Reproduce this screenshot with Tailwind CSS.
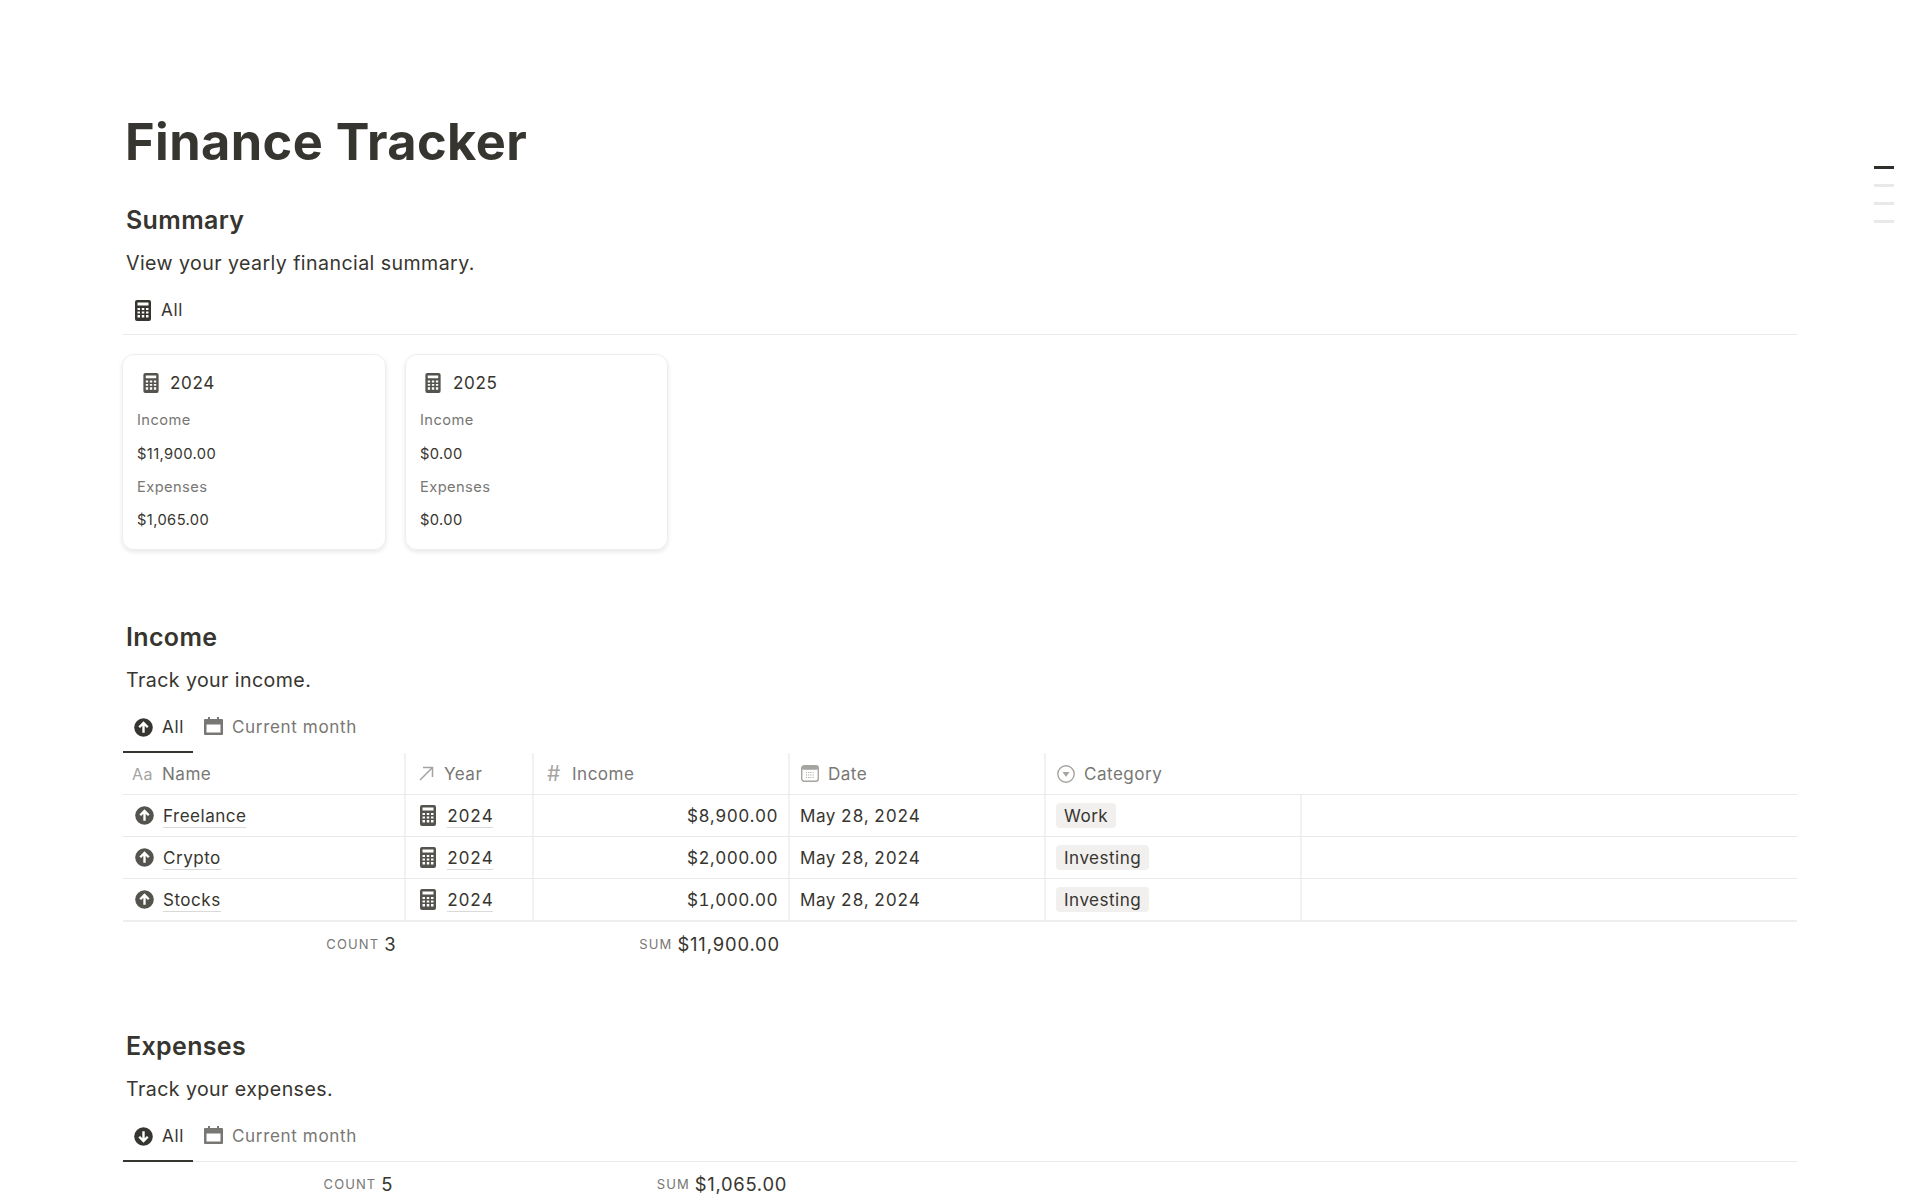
<!DOCTYPE html>
<html lang="en"><head><meta charset="utf-8"><script src="https://cdn.jsdelivr.net/npm/@tailwindcss/browser@4"></script><title>Finance Tracker</title></head>
<body class="bg-white overflow-hidden h-[1199px] relative font-['Inter',sans-serif] text-[#37352f]">
<svg width="0" height="0" class="absolute"><defs>
<symbol id="calc" viewBox="0 0 16 21"><path fill-rule="evenodd" fill="currentColor" d="M2 0h12a2 2 0 0 1 2 2v17a2 2 0 0 1-2 2H2a2 2 0 0 1-2-2V2a2 2 0 0 1 2-2zM2.500 2.500v3h11v-3zM2.500 8v2h2.500V8zM6.800 8v2h2.500V8zM11 8v2h2.500V8zM2.500 11.500v2h2.500v-2zM6.800 11.500v2h2.500v-2zM11 11.500v2h2.500v-2zM2.500 15v2.500h2.500V15zM6.800 15v2.500h2.500V15zM11 15v2.500h2.500V15z"/></symbol>
<symbol id="up" viewBox="0 0 20 20"><circle cx="10" cy="10" r="9.800" fill="currentColor"/><path d="M10 15.500V5.200M5.500 9.700 10 5.200l4.500 4.500" fill="none" stroke="#fff" stroke-width="2.500"/></symbol>
<symbol id="down" viewBox="0 0 20 20"><circle cx="10" cy="10" r="9.800" fill="currentColor"/><path d="M10 4.500v10.300M5.500 10.300 10 14.800l4.500-4.500" fill="none" stroke="#fff" stroke-width="2.500"/></symbol>
<symbol id="cal" viewBox="0 0 19 18"><path fill-rule="evenodd" fill="currentColor" d="M4 0h2v2h7V0h2v2h3a1 1 0 0 1 1 1v14a1 1 0 0 1-1 1H1a1 1 0 0 1-1-1V3a1 1 0 0 1 1-1h3zM2.500 7.500v8h14v-8z"/></symbol>
</defs></svg>

<main class="pt-[112px] pl-[123px] w-[1797px]">
  <h1 class="h-[60px] leading-[60px] pl-[2px] text-[50.500px] font-bold tracking-[0.42px]">Finance Tracker</h1>

  <h2 class="mt-[29px] h-[38px] leading-[38px] pl-[3px] text-[25px] font-semibold tracking-[0.35px]">Summary</h2>
  <p class="mt-[9px] h-[30px] leading-[30px] pl-[3px] text-[19.600px] tracking-[0.42px]">View your yearly financial summary.</p>
  <div class="mt-[8px] h-[49px] border-b border-[#e9e9e7] flex items-center pl-[12px] gap-[10px]">
    <svg class="w-[16px] h-[21px] text-[#37352f]"><use href="#calc"/></svg>
    <span class="text-[17.100px] leading-[24px] tracking-[0.65px]">All</span>
  </div>

  <div class="mt-[19px] flex gap-[19px] h-[196px]">
    <article class="-ml-px w-[264px] rounded-[12px] border border-[#eeeeec] shadow-[0_2px_4px_rgba(15,15,15,0.1)] pl-[14px] pt-[16px] tracking-[0.4px]">
      <div class="flex items-center h-[24px] pl-[6px] gap-[11px]"><svg class="w-[16px] h-[20px] text-[#55534e]"><use href="#calc"/></svg><span class="text-[17.100px] tracking-[0.6px]">2024</span></div>
      <div class="mt-[8px] h-[34px] leading-[34px] text-[14.700px] text-[#787774]">Income</div>
      <div class="h-[34px] leading-[34px] text-[14.700px]">$11,900.00</div>
      <div class="h-[33px] leading-[33px] text-[14.700px] text-[#787774]">Expenses</div>
      <div class="h-[33px] leading-[33px] text-[14.700px]">$1,065.00</div>
    </article>
    <article class="w-[263px] rounded-[12px] border border-[#eeeeec] shadow-[0_2px_4px_rgba(15,15,15,0.1)] pl-[14px] pt-[16px] tracking-[0.4px]">
      <div class="flex items-center h-[24px] pl-[5px] gap-[12px]"><svg class="w-[16px] h-[20px] text-[#55534e]"><use href="#calc"/></svg><span class="text-[17.100px] tracking-[0.6px]">2025</span></div>
      <div class="mt-[8px] h-[34px] leading-[34px] text-[14.700px] text-[#787774]">Income</div>
      <div class="h-[34px] leading-[34px] text-[14.700px]">$0.00</div>
      <div class="h-[33px] leading-[33px] text-[14.700px] text-[#787774]">Expenses</div>
      <div class="h-[33px] leading-[33px] text-[14.700px]">$0.00</div>
    </article>
  </div>

  <h2 class="mt-[68px] h-[38px] leading-[38px] pl-[3px] text-[25px] font-semibold tracking-[0.35px]">Income</h2>
  <p class="mt-[9px] h-[30px] leading-[30px] pl-[3px] text-[19.600px] tracking-[0.42px]">Track your income.</p>
  <div class="mt-[8px] h-[50px] flex text-[17.100px] tracking-[0.62px]">
    <div class="w-[70px] border-b-[2px] border-[#37352f] flex items-center pl-[11px] gap-[9px]"><svg class="w-[19px] h-[19px]"><use href="#up"/></svg><span>All</span></div>
    <div class="border-b-[2px] border-transparent flex items-center pl-[11px] gap-[9px] text-[#787774]"><svg class="w-[19px] h-[18px] -mt-[2px]"><use href="#cal"/></svg><span>Current month</span></div>
  </div>

  <div class="text-[17.100px] tracking-[0.47px]">
    <div class="flex h-[42px] border-b border-[#e9e9e7] text-[#787774]">
      <div class="w-[283px] border-r-[2px] border-[#f1f1ef] flex items-center pl-[9px] gap-[9px]"><span class="text-[#a5a4a0] text-[16px]">Aa</span><span>Name</span></div>
      <div class="w-[128px] border-r-[2px] border-[#f1f1ef] flex items-center pl-[13px] gap-[10px]"><svg class="w-[15px] h-[15px] text-[#a5a4a0]" viewBox="0 0 15 15" fill="none" stroke="currentColor" stroke-width="1.500"><path d="M1 14 13.500 1.500M4 1.500h9.500V11"/></svg><span>Year</span></div>
      <div class="w-[256px] border-r-[2px] border-[#f1f1ef] flex items-center pl-[13px] gap-[10px]"><span class="w-[15px] text-[#a5a4a0] text-[21px] leading-none">#</span><span>Income</span></div>
      <div class="w-[256px] border-r-[2px] border-[#f1f1ef] flex items-center pl-[11px] gap-[9px]"><svg class="w-[18px] h-[17px] text-[#a5a4a0]" viewBox="0 0 18 17"><rect x=".7" y=".7" width="16.600" height="15.600" rx="2.500" fill="none" stroke="currentColor" stroke-width="1.400"/><rect x=".7" y=".7" width="16.600" height="4" rx="2" fill="currentColor"/><path d="M5 7.500h8M5 10h8M5 12.500h8" stroke="currentColor" stroke-dasharray="1 1.200"/></svg><span>Date</span></div>
      <div class="flex items-center pl-[11px] gap-[9px]"><svg class="w-[18px] h-[18px] text-[#a5a4a0]" viewBox="0 0 18 18"><circle cx="9" cy="9" r="8.200" fill="none" stroke="currentColor" stroke-width="1.400"/><path d="M5.500 7h7L9 12z" fill="currentColor"/></svg><span>Category</span></div>
    </div>

    <div class="flex h-[42px] border-b border-[#e9e9e7]">
      <div class="w-[283px] border-r-[2px] border-[#f1f1ef] flex items-center pl-[12px] gap-[9px]"><svg class="w-[19px] h-[19px] text-[#55534e]"><use href="#up"/></svg><span class="mt-[2px] border-b border-[#d9d9d7] leading-[22px]">Freelance</span></div>
      <div class="w-[128px] border-r-[2px] border-[#f1f1ef] flex items-center pl-[14px] gap-[11px]"><svg class="w-[16px] h-[21px] text-[#55534e]"><use href="#calc"/></svg><span class="mt-[2px] border-b border-[#d9d9d7] leading-[22px] tabular-nums">2024</span></div>
      <div class="w-[256px] border-r-[2px] border-[#f1f1ef] flex items-center justify-end pr-[10px] tabular-nums">$8,900.00</div>
      <div class="w-[256px] border-r-[2px] border-[#f1f1ef] flex items-center pl-[10px] tabular-nums">May 28, 2024</div>
      <div class="w-[256px] border-r-[2px] border-[#f1f1ef] flex items-center pl-[10px]"><span class="bg-[#f1f0ef] rounded-[4px] px-[8px] leading-[25px]">Work</span></div>
    </div>
    <div class="flex h-[42px] border-b border-[#e9e9e7]">
      <div class="w-[283px] border-r-[2px] border-[#f1f1ef] flex items-center pl-[12px] gap-[9px]"><svg class="w-[19px] h-[19px] text-[#55534e]"><use href="#up"/></svg><span class="mt-[2px] border-b border-[#d9d9d7] leading-[22px]">Crypto</span></div>
      <div class="w-[128px] border-r-[2px] border-[#f1f1ef] flex items-center pl-[14px] gap-[11px]"><svg class="w-[16px] h-[21px] text-[#55534e]"><use href="#calc"/></svg><span class="mt-[2px] border-b border-[#d9d9d7] leading-[22px] tabular-nums">2024</span></div>
      <div class="w-[256px] border-r-[2px] border-[#f1f1ef] flex items-center justify-end pr-[10px] tabular-nums">$2,000.00</div>
      <div class="w-[256px] border-r-[2px] border-[#f1f1ef] flex items-center pl-[10px] tabular-nums">May 28, 2024</div>
      <div class="w-[256px] border-r-[2px] border-[#f1f1ef] flex items-center pl-[10px]"><span class="bg-[#f1f0ef] rounded-[4px] px-[8px] leading-[25px]">Investing</span></div>
    </div>
    <div class="flex h-[43px] border-b-[2px] border-[#eeeeec]">
      <div class="w-[283px] border-r-[2px] border-[#f1f1ef] flex items-center pl-[12px] gap-[9px]"><svg class="w-[19px] h-[19px] text-[#55534e]"><use href="#up"/></svg><span class="mt-[2px] border-b border-[#d9d9d7] leading-[22px]">Stocks</span></div>
      <div class="w-[128px] border-r-[2px] border-[#f1f1ef] flex items-center pl-[14px] gap-[11px]"><svg class="w-[16px] h-[21px] text-[#55534e]"><use href="#calc"/></svg><span class="mt-[2px] border-b border-[#d9d9d7] leading-[22px] tabular-nums">2024</span></div>
      <div class="w-[256px] border-r-[2px] border-[#f1f1ef] flex items-center justify-end pr-[10px] tabular-nums">$1,000.00</div>
      <div class="w-[256px] border-r-[2px] border-[#f1f1ef] flex items-center pl-[10px] tabular-nums">May 28, 2024</div>
      <div class="w-[256px] border-r-[2px] border-[#f1f1ef] flex items-center pl-[10px]"><span class="bg-[#f1f0ef] rounded-[4px] px-[8px] leading-[25px]">Investing</span></div>
    </div>

    <div class="flex h-[46px]">
      <div class="w-[273px] flex items-center justify-end gap-[5px]"><span class="text-[13px] tracking-[1.100px] text-[#787774]">COUNT</span><span class="text-[18.400px]">3</span></div>
      <div class="w-[384px] flex items-center justify-end gap-[5px]"><span class="text-[13px] tracking-[1.100px] text-[#787774]">SUM</span><span class="text-[18.400px] tracking-[0.85px]">$11,900.00</span></div>
    </div>
  </div>

  <h2 class="mt-[59px] h-[38px] leading-[38px] pl-[3px] text-[25px] font-semibold tracking-[0.35px]">Expenses</h2>
  <p class="mt-[9px] h-[30px] leading-[30px] pl-[3px] text-[19.600px] tracking-[0.42px]">Track your expenses.</p>
  <div class="mt-[8px] h-[50px] border-b border-[#e9e9e7] flex text-[17.100px] tracking-[0.62px]">
    <div class="w-[70px] border-b-[2px] border-[#37352f] -mb-px flex items-center pl-[11px] gap-[9px]"><svg class="w-[19px] h-[19px]"><use href="#down"/></svg><span>All</span></div>
    <div class="flex items-center border-b-[2px] border-transparent -mb-px pl-[11px] gap-[9px] text-[#787774]"><svg class="w-[19px] h-[18px] -mt-[2px]"><use href="#cal"/></svg><span>Current month</span></div>
  </div>
  <div class="flex h-[46px] text-[17.100px] tracking-[0.47px]">
    <div class="w-[270px] flex items-center justify-end gap-[5px]"><span class="text-[13px] tracking-[1.100px] text-[#787774]">COUNT</span><span class="text-[18.400px]">5</span></div>
    <div class="w-[394px] flex items-center justify-end gap-[5px]"><span class="text-[13px] tracking-[1.100px] text-[#787774]">SUM</span><span class="text-[18.400px] tracking-[0.7px]">$1,065.00</span></div>
  </div>
</main>

<nav class="absolute left-[1874px] top-[166px] w-[20px] flex flex-col gap-[15.500px]">
  <div class="h-[2.500px] bg-[#2f2e2b]"></div><div class="h-[2.500px] bg-[#e9e9e7]"></div><div class="h-[2.500px] bg-[#e9e9e7]"></div><div class="h-[2.500px] bg-[#e9e9e7]"></div>
</nav>
</body></html>
